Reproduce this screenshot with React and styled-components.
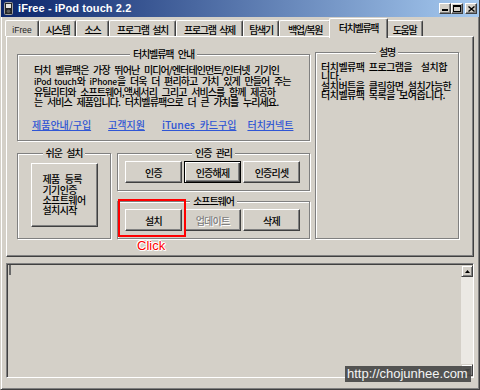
import React from 'react';
import styled, { createGlobalStyle, css } from 'styled-components';

const KR = `"Noto Sans CJK KR", "Noto Sans", sans-serif`;
const FACE = '#d4d0c8';
const KW = 500;

const GlobalStyle = createGlobalStyle`
  html, body { margin: 0; padding: 0; background: ${FACE}; }
  body { width: 480px; height: 390px; overflow: hidden; font-family: ${KR}; }
  #root { width: 480px; height: 390px; }
`;

const kText = css`
  font-family: ${KR};
  font-weight: ${KW};
  font-size: 10px;
  letter-spacing: -1.1px;
  word-spacing: 3.3px;
`;

const Window = styled.div`
  position: relative;
  box-sizing: border-box;
  width: 480px;
  height: 390px;
  background: ${FACE};
  border-style: solid;
  border-width: 0 1px 1px 1px;
  border-color: ${FACE} #404040 #404040 ${FACE};
  box-shadow: inset 1px 0 #fff, inset -1px -1px #808080;
  display: flex;
  flex-direction: column;
`;

const TitleBar = styled.div`
  height: 17px;
  flex: none;
  display: flex;
  align-items: center;
  padding: 0 2px 0 3px;
  background: linear-gradient(to right, #0a246a 0%, #a6caf0 100%);
`;

const TitleText = styled.div`
  margin-left: 5px;
  font-family: "Liberation Sans", Arial, sans-serif;
  font-weight: bold;
  font-size: 11px;
  letter-spacing: 0.1px;
  color: #fff;
  flex: 1;
  line-height: 17px;
`;

const CaptionButtons = styled.div`
  display: flex;
  align-items: center;
`;

const CaptionButton = styled.div`
  box-sizing: border-box;
  width: 12px;
  height: 11px;
  margin-left: ${p => (p.$gap ? 2 : 0)}px;
  background: ${FACE};
  border: 1px solid;
  border-color: #fff #404040 #404040 #fff;
  box-shadow: inset -1px -1px #808080;
  display: flex;
  align-items: ${p => (p.$bottom ? 'flex-end' : 'center')};
  justify-content: center;
  padding-bottom: ${p => (p.$bottom ? 2 : 0)}px;
`;

const Body = styled.div`
  flex: 1;
  display: flex;
  flex-direction: column;
  padding: 0 5px;
`;

const TabStrip = styled.div`
  height: 19px;
  display: flex;
  align-items: flex-end;
  margin-left: -1px;
`;

const Tab = styled.div`
  ${kText};
  box-sizing: border-box;
  width: ${p => p.$w}px;
  height: 16px;
  padding-top: 2px;
  display: flex;
  align-items: center;
  justify-content: center;
  background: ${FACE};
  border-top: 1px solid #fff;
  border-left: 1px solid #fff;
  border-right: 1px solid #404040;
  box-shadow: inset -1px 0 #808080;
  border-radius: 2px 2px 0 0;
  letter-spacing: -1.3px;
  word-spacing: 2.6px;
  color: #000;
  white-space: nowrap;
  ${p =>
    p.$latin &&
    css`
      font-family: "Liberation Sans", Arial, sans-serif;
      font-weight: 400;
      font-size: 8.5px;
      letter-spacing: 0;
      color: #222;
    `}
  ${p =>
    p.$active &&
    css`
      position: relative;
      z-index: 1;
      width: ${p.$w + 4}px;
      height: 20px;
      margin: 0 -2px -2px;
      padding-top: 0;
      padding-bottom: 2px;
    `}
`;

const TabPanel = styled.div`
  box-sizing: border-box;
  height: 221px;
  flex: none;
  border: 1px solid;
  border-color: #fff #404040 #404040 #fff;
  box-shadow: inset -1px -1px #808080;
  padding: 9px 0 0 10px;
`;

const PanelGrid = styled.div`
  display: grid;
  grid-template-columns: 293px 144px;
  column-gap: 5px;
  align-items: start;
`;

const LeftCol = styled.div`
  display: grid;
  grid-template-rows: 93px 92px;
  row-gap: 6px;
  padding-top: 2px;
`;

const LowerRow = styled.div`
  display: grid;
  grid-template-columns: 94px 193px;
  column-gap: 6px;
`;

const RightStack = styled.div`
  display: grid;
  grid-template-rows: 44px 44px;
  row-gap: 4px;
`;

const Group = styled.fieldset`
  box-sizing: border-box;
  margin: 0;
  min-width: 0;
  height: ${p => (p.$h ? `${p.$h}px` : 'auto')};
  padding: 0;
  border: 1px solid #808080;
  box-shadow: inset 1px 1px #fff, 1px 1px #fff;
  display: block;
`;

const Legend = styled.legend`
  ${kText};
  margin: 0 auto;
  padding: 0 3px;
  background: ${FACE};
  line-height: 12px;
  color: #000;
  white-space: pre;
`;

const InfoText = styled.p`
  ${kText};
  letter-spacing: -0.9px;
  margin: 5px 0 0 16px;
  line-height: 10.8px;
  color: #000;
  white-space: pre;
`;

const Latin = styled.span`
  font-size: ${p => p.$size || 8.5}px;
  letter-spacing: ${p => p.$ls ?? -0.2}px;
  word-spacing: 1px;
`;

const LinkRow = styled.div`
  display: flex;
  margin: 11px 0 0 14px;
  line-height: 12px;
`;

const Link = styled.a`
  ${kText};
  margin-right: ${p => p.$after || 0}px;
  letter-spacing: 0;
  word-spacing: 2.5px;
  color: #2f55d4;
  text-decoration: underline;
  white-space: nowrap;
  cursor: pointer;
`;

const DescText = styled.div`
  ${kText};
  letter-spacing: -0.5px;
  word-spacing: 2.5px;
  margin: 4px 0 0 5px;
  line-height: 9.4px;
  color: #000;
  white-space: pre;
`;

const ButtonRow = styled.div`
  display: flex;
  gap: 2px;
  padding: 2px 0 0 7px;
`;

const CenterBox = styled.div`
  display: flex;
  justify-content: center;
  padding-top: 4px;
`;

const Button = styled.button`
  ${kText};
  letter-spacing: -0.8px;
  box-sizing: border-box;
  width: ${p => p.$w || 57}px;
  height: ${p => p.$h || 22}px;
  margin: 0;
  padding: 0;
  display: flex;
  align-items: center;
  justify-content: center;
  color: #000;
  background: ${FACE};
  border: 1px solid;
  border-color: #fff #404040 #404040 #fff;
  box-shadow: inset -1px -1px #808080;
  ${p =>
    p.$default &&
    css`
      border-color: #000;
      box-shadow: inset 1px 1px #fff, inset -1px -1px #404040, inset -2px -2px #808080;
    `}
  ${p =>
    p.disabled &&
    css`
      color: #808080;
      text-shadow: 1px 1px #fff;
    `}
`;

const MultiLine = styled.span`
  text-align: left;
  letter-spacing: -0.6px;
  line-height: 10.3px;
  white-space: pre;
`;

const SoftCell = styled.div`
  position: relative;
  display: grid;
`;

const Highlight = styled.div`
  position: absolute;
  left: 1px;
  top: 4px;
  width: 68px;
  height: 38px;
  box-sizing: border-box;
  border: 2px solid #f00;
  pointer-events: none;
`;

const ClickLabel = styled.div`
  position: absolute;
  left: 20px;
  top: 44px;
  font-family: "Liberation Sans", Arial, sans-serif;
  font-size: 13px;
  line-height: 14px;
  color: #f00;
  text-shadow: 1px 0 #fff, -1px 0 #fff, 0 1px #fff, 0 -1px #fff, 1px 1px #fff, -1px -1px #fff;
`;

const LogBox = styled.div`
  box-sizing: border-box;
  margin-top: 6px;
  height: 115px;
  flex: none;
  display: flex;
  border: 1px solid;
  border-color: #808080 #fff #fff #808080;
  box-shadow: inset 1px 1px #404040, inset -1px -1px ${FACE};
  padding: 1px 0 1px 1px;
  background: ${FACE};
`;

const LogText = styled.div`
  flex: 1;
  padding: 0 0 0 1px;
`;

const Caret = styled.span`
  display: block;
  width: 2px;
  height: 10px;
  background: #6a6a6a;
`;

const ScrollBar = styled.div`
  width: 12px;
  display: flex;
  flex-direction: column;
  justify-content: space-between;
  background: #ebe9e4;
`;

const ScrollButton = styled.div`
  box-sizing: border-box;
  width: 12px;
  height: 12px;
  background: ${FACE};
  border: 1px solid;
  border-color: ${FACE} #404040 #404040 ${FACE};
  box-shadow: inset 1px 1px #fff, inset -1px -1px #808080;
  display: flex;
  align-items: center;
  justify-content: center;
`;

const Watermark = styled.div`
  position: absolute;
  left: 344px;
  top: 366px;
  width: 126px;
  height: 16px;
  box-sizing: border-box;
  padding-left: 2px;
  background: rgba(72, 72, 72, 0.92);
  color: #f4f4f4;
  font-family: "Liberation Sans", Arial, sans-serif;
  font-size: 13px;
  line-height: 16px;
  white-space: nowrap;
`;

const AppIcon = () => (
  <svg width="9" height="13" viewBox="0 0 9 13">
    <rect x="0.5" y="0.5" width="8" height="12" rx="1" fill="#262626" stroke="#a0a0a0" />
    <rect x="2" y="2" width="5" height="4" fill="#e4e4e4" />
    <circle cx="4.5" cy="9.2" r="1.8" fill="#5a5a5a" />
  </svg>
);

const tabs = [
  { label: 'iFree', w: 34, latin: true },
  { label: '시스템', w: 37 },
  { label: '소스', w: 33 },
  { label: '프로그램 설치', w: 67 },
  { label: '프로그램 삭제', w: 67 },
  { label: '탐색기', w: 36 },
  { label: '백업/복원', w: 52 },
  { label: '터치벨류팩', w: 55, active: true },
  { label: '도움말', w: 37 },
];

const descLines = [
  '터치벨류팩 프로그램을  설치합',
  '니다.',
  '설치버튼을 클릭하면 설치가능한',
  '터치벨류팩 목록을 보여줍니다.',
].join('\n');

export default function App() {
  return (
    <>
      <GlobalStyle />
      <Window>
        <TitleBar>
          <AppIcon />
          <TitleText>iFree - iPod touch 2.2</TitleText>
          <CaptionButtons>
            <CaptionButton $bottom>
              <svg width="6" height="2"><rect width="6" height="2" fill="#000" /></svg>
            </CaptionButton>
            <CaptionButton>
              <svg width="8" height="7" viewBox="0 0 8 7">
                <rect x="0.5" y="0.5" width="7" height="6" fill="none" stroke="#000" />
                <rect x="0" y="0" width="8" height="2" fill="#000" />
              </svg>
            </CaptionButton>
            <CaptionButton $gap>
              <svg width="7" height="6" viewBox="0 0 7 6">
                <path d="M0.5 0.5 L6.5 5.5 M6.5 0.5 L0.5 5.5" stroke="#000" strokeWidth="1.4" />
              </svg>
            </CaptionButton>
          </CaptionButtons>
        </TitleBar>
        <Body>
          <TabStrip>
            {tabs.map(t => (
              <Tab key={t.label} $w={t.w} $latin={t.latin} $active={t.active}>
                {t.label}
              </Tab>
            ))}
          </TabStrip>
          <TabPanel>
            <PanelGrid>
              <LeftCol>
                <Group>
                  <Legend>터치벨류팩 안내</Legend>
                  <InfoText>
                    {'터치 벨류팩은 가장 뛰어난 미디어/엔터테인먼트/인터넷 기기인\n'}
                    <Latin>iPod touch</Latin>와 <Latin>iPhone</Latin>
                    {'을 더욱 더 편리하고 가치 있게 만들어 주는\n'}
                    {'유틸리티와 소프트웨어,액세서리 그리고 서비스를 함께 제공하\n'}
                    {'는 서비스 제품입니다. 터치벨류팩으로 더 큰 가치를 누리세요.'}
                  </InfoText>
                  <LinkRow>
                    <Link $after={17}>제품안내/구입</Link>
                    <Link $after={17}>고객지원</Link>
                    <Link $after={11}>
                      <Latin $size={10.5} $ls={0}>iTunes</Latin> 카드구입
                    </Link>
                    <Link>터치커넥트</Link>
                  </LinkRow>
                </Group>
                <LowerRow>
                  <Group>
                    <Legend>쉬운 설치</Legend>
                    <CenterBox>
                      <Button $w={67} $h={64}>
                        <MultiLine>{'제품 등록\n기기인증\n소프트웨어\n설치시작'}</MultiLine>
                      </Button>
                    </CenterBox>
                  </Group>
                  <RightStack>
                    <Group>
                      <Legend>인증 관리</Legend>
                      <ButtonRow>
                        <Button>인증</Button>
                        <Button $default>인증해제</Button>
                        <Button>인증리셋</Button>
                      </ButtonRow>
                    </Group>
                    <SoftCell>
                      <Group>
                        <Legend>소프트웨어</Legend>
                        <ButtonRow>
                          <Button>설치</Button>
                          <Button disabled>업데이트</Button>
                          <Button>삭제</Button>
                        </ButtonRow>
                      </Group>
                      <Highlight />
                      <ClickLabel>Click</ClickLabel>
                    </SoftCell>
                  </RightStack>
                </LowerRow>
              </LeftCol>
              <Group $h={193}>
                <Legend>설명</Legend>
                <DescText>{descLines}</DescText>
              </Group>
            </PanelGrid>
          </TabPanel>
          <LogBox>
            <LogText>
              <Caret />
            </LogText>
            <ScrollBar>
              <ScrollButton>
                <svg width="5" height="3"><path d="M2.5 0 L5 3 L0 3 Z" fill="#000" /></svg>
              </ScrollButton>
              <ScrollButton>
                <svg width="5" height="3"><path d="M0 0 L5 0 L2.5 3 Z" fill="#000" /></svg>
              </ScrollButton>
            </ScrollBar>
          </LogBox>
        </Body>
        <Watermark>http://chojunhee.com</Watermark>
      </Window>
    </>
  );
}
